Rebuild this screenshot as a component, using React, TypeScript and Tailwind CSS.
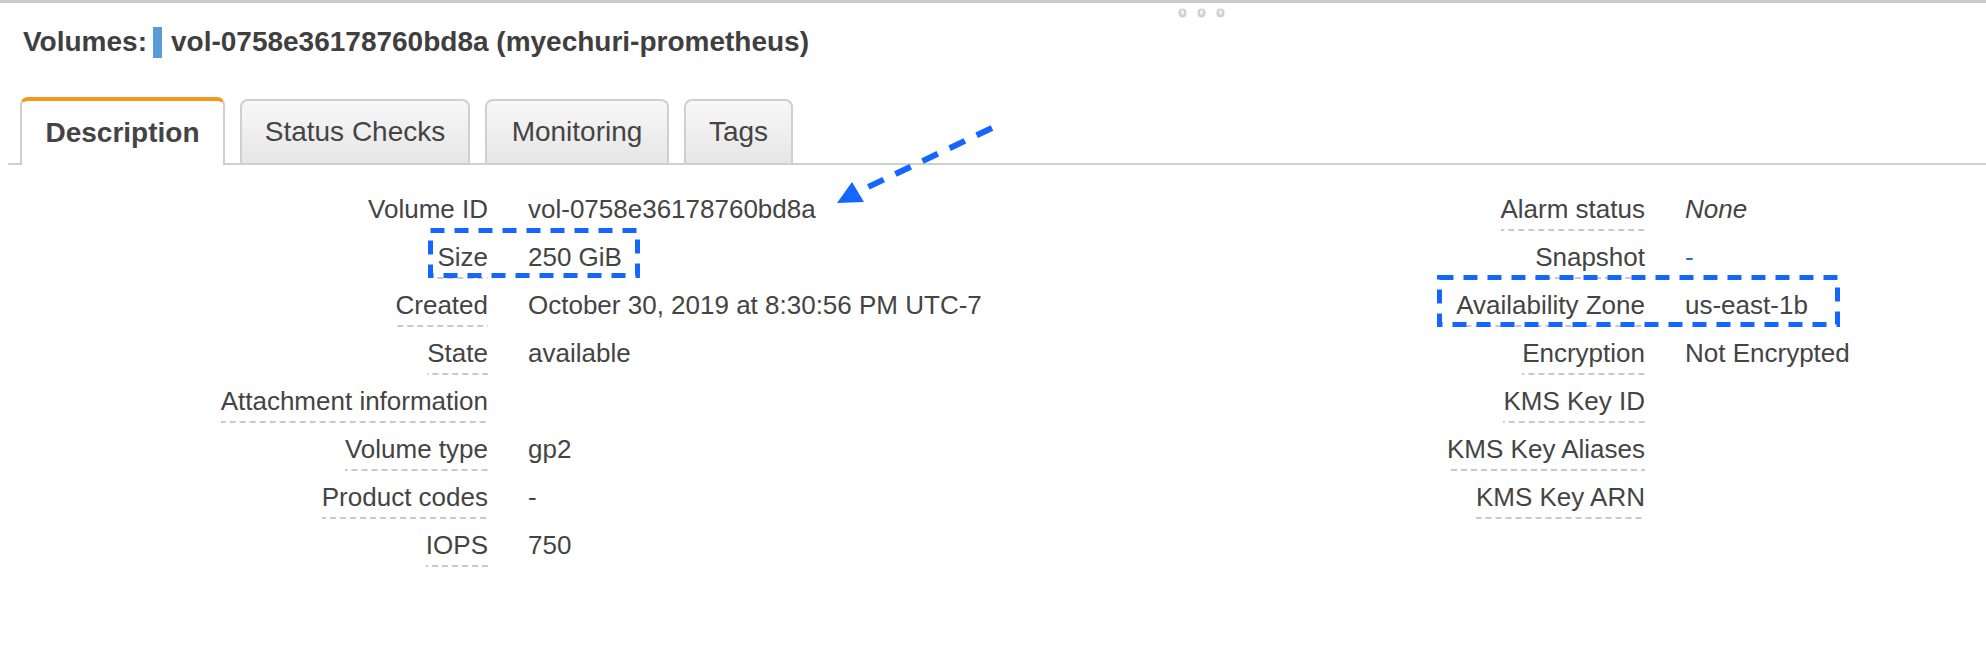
import React from "react";

const font = { fontFamily: '"Liberation Sans", Arial, sans-serif' };

type Row = { label: string; value?: React.ReactNode; underline?: boolean };

const leftRows: Row[] = [
  { label: "Volume ID", value: "vol-0758e36178760bd8a", underline: false },
  { label: "Size", value: "250 GiB" },
  { label: "Created", value: "October 30, 2019 at 8:30:56 PM UTC-7" },
  { label: "State", value: "available" },
  { label: "Attachment information" },
  { label: "Volume type", value: "gp2" },
  { label: "Product codes", value: "-" },
  { label: "IOPS", value: "750" },
];

const rightRows: Row[] = [
  { label: "Alarm status", value: <span className="italic">None</span> },
  { label: "Snapshot", value: <span className="text-[#1f6fc5]">-</span> },
  { label: "Availability Zone", value: "us-east-1b" },
  { label: "Encryption", value: "Not Encrypted" },
  { label: "KMS Key ID" },
  { label: "KMS Key Aliases" },
  { label: "KMS Key ARN" },
];

function DetailRow({ row, labelWidth }: { row: Row; labelWidth: string }) {
  return (
    <div className="flex items-start h-[48px] pt-[8px]">
      <div className={`${labelWidth} shrink-0 flex justify-end`}>
        <span
          className={
            row.underline === false
              ? "block leading-[30px] pb-[7px] whitespace-nowrap"
              : "block leading-[30px] pb-[7px] whitespace-nowrap bg-[linear-gradient(to_right,#c9c9c9_60%,transparent_60%)] bg-[length:10px_2px] bg-repeat-x bg-bottom"
          }
        >
          {row.label}
        </span>
      </div>
      <div className="ml-[40px] leading-[30px] whitespace-nowrap">{row.value}</div>
    </div>
  );
}

function Tab({ label, active, width }: { label: string; active?: boolean; width: string }) {
  if (active) {
    return (
      <div
        className={`${width} h-[68px] -mb-[2px] flex items-center justify-center rounded-t-[8px] border-x-2 border-t-[4px] border-x-[#cfcfcf] border-t-[#f7971e] bg-white font-bold`}
      >
        {label}
      </div>
    );
  }
  return (
    <div
      className={`${width} h-[64px] flex items-center justify-center rounded-t-[8px] border-2 border-b-0 border-[#cfcfcf] bg-gradient-to-b from-[#f8f8f8] to-[#e6e6e6]`}
    >
      {label}
    </div>
  );
}

function Grip() {
  return (
    <svg width="9" height="10" viewBox="0 0 9 10">
      <rect x="0.5" y="0.5" width="8" height="9" rx="4" fill="#d2d2d2" />
      <rect x="3" y="2" width="3" height="4.5" rx="1.5" fill="#f4f4f4" />
    </svg>
  );
}

export default function App() {
  return (
    <div
      className="relative w-[1986px] h-[646px] overflow-hidden bg-white text-[#444]"
      style={font}
    >
      <div className="h-[3px] bg-[#cacaca]" />
      <div className="absolute left-[1178px] top-[8px] flex gap-[10px]">
        <Grip />
        <Grip />
        <Grip />
      </div>

      {/* header */}
      <div className="flex items-center pl-[23px] h-[78px] text-[28px] font-bold text-[#3f3f3f]">
        <span className="leading-[34px]">Volumes:</span>
        <span className="ml-[6px] w-[9px] h-[31px] bg-[#5b9bd5]" />
        <span className="ml-[9px] leading-[34px]">vol-0758e36178760bd8a (myechuri-prometheus)</span>
      </div>

      {/* tabs */}
      <div className="mt-[16px] ml-[8px] flex items-end gap-[15px] pl-[12px] border-b-2 border-[#cfcfcf] text-[28px]">
        <Tab label="Description" active width="w-[205px]" />
        <Tab label="Status Checks" width="w-[230px]" />
        <Tab label="Monitoring" width="w-[184px]" />
        <Tab label="Tags" width="w-[109px]" />
      </div>

      {/* details */}
      <div className="flex pt-[21px] text-[26px]">
        <div className="w-[1100px] shrink-0">
          {leftRows.map((r) => (
            <DetailRow key={r.label} row={r} labelWidth="w-[488px]" />
          ))}
        </div>
        <div className="flex-1">
          {rightRows.map((r) => (
            <DetailRow key={r.label} row={r} labelWidth="w-[545px]" />
          ))}
        </div>
      </div>

      {/* annotations */}
      <svg className="absolute left-0 top-0 pointer-events-none" width="1986" height="646">
        <rect
          x="430.5"
          y="230.5"
          width="207"
          height="45"
          fill="none"
          stroke="#1466ff"
          strokeWidth="5"
          strokeDasharray="14 10"
        />
        <rect
          x="1439.5"
          y="277.5"
          width="398"
          height="47"
          fill="none"
          stroke="#1466ff"
          strokeWidth="5"
          strokeDasharray="14 10"
        />
        <line
          x1="992"
          y1="128"
          x2="866"
          y2="188"
          stroke="#1466ff"
          strokeWidth="6"
          strokeDasharray="17 13"
        />
        <polygon points="837,203 864,202 852,182" fill="#1466ff" />
      </svg>
    </div>
  );
}
